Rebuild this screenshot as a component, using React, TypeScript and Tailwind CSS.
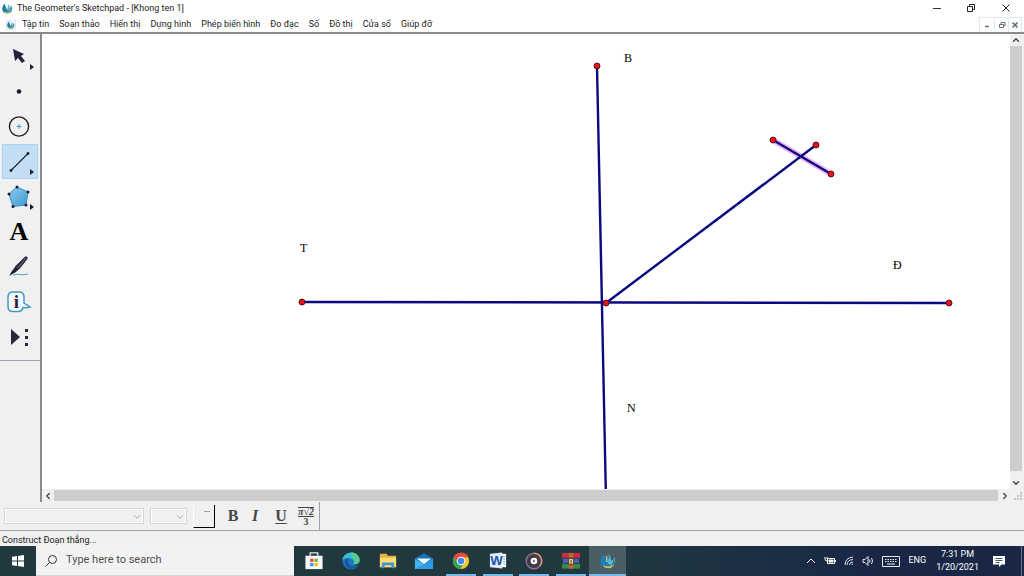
import type { ReactNode } from "react";
import { ChevronDown, ChevronLeft, ChevronRight, ChevronUp } from "lucide-react";

const menus = [
  "Tập tin",
  "Soạn thảo",
  "Hiển thị",
  "Dựng hình",
  "Phép biến hình",
  "Đo đạc",
  "Số",
  "Đồ thị",
  "Cửa sổ",
  "Giúp đỡ",
];

function AppLogo({ className }: { className: string }) {
  return (
    <svg viewBox="0 0 16 16" className={className} aria-hidden="true">
      <path d="M4 1C-1 5-1 13 5 15c4 1 8 0 10-4-4 1-7 0-8-3C5 6 5 4 4 1z" fill="#1c7fae" />
      <path d="M7 1c3 2 2 4 1 6s0 5 3 5c4-1 5-5 3-8-1 3-2 4-3 3 0-3-1-5-4-6z" fill="#58b5cb" />
      <path d="M3 12c3 2 8 2 11-1-1 4-5 5-7 4-2 0-3-1-4-3z" fill="#d9c04a" />
      <path d="M6 3c2 2 0 4 1 6" stroke="#e5f3e4" strokeWidth="1" fill="none" />
      <path d="M12 4c2 3 2 6 0 8" stroke="#1d5c91" strokeWidth="1" fill="none" />
    </svg>
  );
}

function TitleBar() {
  return (
    <header className="flex h-[17px] shrink-0 items-center justify-between bg-white pl-0.5 text-[9px]">
      <div className="flex items-center gap-1">
        <AppLogo className="size-[11px]" />
        <h1>The Geometer's Sketchpad - [Khong ten 1]</h1>
      </div>
      <div className="flex h-full pb-px">
        <button aria-label="Minimize" className="flex w-[34px] items-center justify-center">
          <svg viewBox="0 0 10 10" className="size-2.5" stroke="#333" fill="none">
            <path d="M1 5.5h8" />
          </svg>
        </button>
        <button aria-label="Restore" className="flex w-[34px] items-center justify-center">
          <svg viewBox="0 0 10 10" className="size-2.5" stroke="#222" fill="none">
            <path d="M1.5 3.5h5v5h-5zM3.5 3.5v-2h5v5h-2" />
          </svg>
        </button>
        <button aria-label="Close" className="flex w-9 items-center justify-center">
          <svg viewBox="0 0 10 10" className="size-2.5" stroke="#222" fill="none">
            <path d="M1.5 1.5l7 7M8.5 1.5l-7 7" />
          </svg>
        </button>
      </div>
    </header>
  );
}

function MenuBar() {
  return (
    <nav className="flex h-[15px] shrink-0 items-center justify-between bg-white pl-1.5 pr-0.5 text-[9px]">
      <div className="flex items-center">
        <span className="mr-1.5 flex size-2.5 items-center justify-center border border-slate-200 bg-slate-50">
          <AppLogo className="size-2" />
        </span>
        <div className="flex gap-2.5">
          {menus.map((m) => (
            <button key={m}>{m}</button>
          ))}
        </div>
      </div>
      <div className="flex self-stretch text-[#5c7387]">
        <button aria-label="Minimize document" className="flex w-[15px] items-center justify-center border-l border-t border-slate-200">
          <svg viewBox="0 0 8 8" className="size-2" stroke="currentColor" fill="none">
            <path d="M2 5.5h4" strokeWidth="1.4" />
          </svg>
        </button>
        <button aria-label="Restore document" className="flex w-3.5 items-center justify-center border-l border-t border-slate-200">
          <svg viewBox="0 0 8 8" className="size-2" stroke="currentColor" fill="none">
            <path d="M1.5 3.5h4v3h-4zM3 3V1.5h4v3H6" />
          </svg>
        </button>
        <button aria-label="Close document" className="flex w-3.5 items-center justify-center border-x border-t border-slate-200">
          <svg viewBox="0 0 8 8" className="size-2" stroke="currentColor" fill="none">
            <path d="M1.5 1.5l5 5M6.5 1.5l-5 5" strokeWidth="1.6" />
          </svg>
        </button>
      </div>
    </nav>
  );
}

const tools: { name: string; icon: ReactNode }[] = [
  {
    name: "Arrow",
    icon: (
      <>
        <path d="M14 10l11 5-3 2 4 5-3 2-4-5-3 3z" fill="#25213f" />
        <path d="M31 25l4 3-4 3z" fill="#222136" />
      </>
    ),
  },
  { name: "Point", icon: <circle cx="20" cy="17.5" r="2.3" fill="#1d1b33" /> },
  {
    name: "Compass",
    icon: (
      <>
        <circle cx="20" cy="17.5" r="9.6" fill="none" stroke="#1f2023" strokeWidth="1.4" />
        <path d="M17.5 17.5h5M20 15v5" stroke="#3e9fd0" />
      </>
    ),
  },
  {
    name: "Straightedge",
    icon: (
      <>
        <path d="M12 26.5l17-17" stroke="#26263b" strokeWidth="1.3" />
        <circle cx="12" cy="26.5" r="1.4" fill="#1d1b33" />
        <circle cx="29" cy="9.5" r="1.4" fill="#1d1b33" />
        <path d="M31 25l4 3-4 3z" fill="#222136" />
      </>
    ),
  },
  {
    name: "Polygon",
    icon: (
      <>
        <path d="M18 8l11 5-2 13-13 1.5L10 15z" fill="url(#poly)" stroke="#358fc0" />
        <g fill="#1d1b33">
          <circle cx="18" cy="8" r="1.5" />
          <circle cx="29" cy="13" r="1.5" />
          <circle cx="27" cy="26" r="1.5" />
          <circle cx="14" cy="27.5" r="1.5" />
          <circle cx="10" cy="15" r="1.5" />
          <path d="M31 25l4 3-4 3z" />
        </g>
      </>
    ),
  },
  { name: "Text", icon: null },
  {
    name: "Marker",
    icon: (
      <>
        <path d="M26 8q3-1 2 2l-8 10-4-2z" fill="#35344c" stroke="#35344c" />
        <path d="M16 18l4 2-3 3-7 4 3-5z" fill="#20202e" />
        <path d="M25 9l1 1-7 9" stroke="#77778a" strokeWidth=".7" fill="none" />
        <path d="M14 26c5-2 9 1 15-1" stroke="#4da2cd" fill="none" />
      </>
    ),
  },
  {
    name: "Information",
    icon: (
      <>
        <path
          d="M14 8h6q5 0 5 5v6l6 4q-3 1-7 .5-1 4-5 4h-5q-5 0-5-5V13q0-5 5-5z"
          fill="#f7fbff"
          stroke="#4598cc"
          strokeWidth="1.5"
        />
        <text x="17.5" y="24" textAnchor="middle" fill="#29223f" className="font-['Liberation_Serif',serif] text-[19px] font-bold">
          i
        </text>
      </>
    ),
  },
  {
    name: "Custom",
    icon: (
      <g fill="#29263e">
        <path d="M12 10l9 8-9 8zM26 10h3v3h-3zM26 17h3v3h-3zM26 24h3v3h-3z" />
      </g>
    ),
  },
];

function Toolbox() {
  return (
    <aside className="w-10 shrink-0 bg-[#f0f0f0] pt-[5px]">
      <div className="flex flex-col border-b border-gray-400 pb-1.5">
        {tools.map((t) => (
          <button
            key={t.name}
            aria-label={t.name}
            className={
              t.name === "Straightedge"
                ? "mx-0.5 flex h-[35px] items-center justify-center border border-[#a9d3f2] bg-[#c3def4]"
                : "mx-0.5 flex h-[35px] items-center justify-center"
            }
          >
            {t.icon ? (
              <svg viewBox="2 0 38 35" className="h-[35px] w-[38px] shrink-0">
                <defs>
                  <linearGradient id="poly" x1="0" y1="0" x2="1" y2="1">
                    <stop offset="0" stopColor="#8dcdf0" />
                    <stop offset="1" stopColor="#3d9ad0" />
                  </linearGradient>
                </defs>
                {t.icon}
              </svg>
            ) : (
              <span className="pr-0.5 font-['Liberation_Serif',serif] text-[26px] font-bold leading-none text-black">A</span>
            )}
          </button>
        ))}
      </div>
    </aside>
  );
}

const segments = [
  [597, 66, 606, 500],
  [302, 302, 949, 303],
  [606, 303, 816, 145],
  [773, 140, 831, 174],
];

const points = [
  [597, 66],
  [302, 302],
  [949, 303],
  [606, 303],
  [816, 145],
  [773, 140],
  [831, 174],
];

const labels: [string, number, number][] = [
  ["B", 624, 62],
  ["T", 300, 252],
  ["Đ", 893, 269],
  ["N", 627, 412],
];

function Sketch() {
  return (
    <svg
      viewBox="42 34 968 455"
      preserveAspectRatio="xMinYMin slice"
      className="min-h-0 min-w-0 flex-1 bg-white"
    >
      <line x1="773" y1="140" x2="831" y2="174" stroke="#f0b4f4" strokeWidth="6" />
      {segments.map(([x1, y1, x2, y2], i) => (
        <line key={i} x1={x1} y1={y1} x2={x2} y2={y2} stroke="#0a0a80" strokeWidth="2.4" />
      ))}
      {points.map(([x, y], i) => (
        <circle key={i} cx={x} cy={y} r="3" fill="#ee1018" stroke="#4a0a18" strokeWidth="0.9" />
      ))}
      {labels.map(([text, x, y]) => (
        <text key={text} x={x} y={y} className="fill-black font-['Liberation_Serif',serif] text-[12px]">
          {text}
        </text>
      ))}
    </svg>
  );
}

function Workspace() {
  return (
    <main className="flex min-h-0 flex-1 border-t-2 border-[#8b8b8b] bg-[#f0f0f0]">
      <Toolbox />
      <div className="flex min-w-0 flex-1 flex-col border-l-2 border-[#8b8b8b]">
        <div className="flex min-h-0 flex-1">
          <Sketch />
          <div className="flex w-3.5 flex-col items-center pr-0.5 text-gray-700">
            <button aria-label="Scroll up" className="flex h-3 items-center">
              <ChevronUp className="size-2.5" strokeWidth={3} />
            </button>
            <div className="w-full flex-1 bg-[#cdcdcd]" />
            <button aria-label="Scroll down" className="flex h-[18px] items-center pt-1.5">
              <ChevronDown className="size-2.5" strokeWidth={3} />
            </button>
          </div>
        </div>
        <div className="flex h-[13px] items-center text-gray-700">
          <button aria-label="Scroll left" className="flex w-3 justify-center">
            <ChevronLeft className="size-2.5" strokeWidth={3} />
          </button>
          <div className="h-[11px] flex-1 bg-[#cdcdcd]" />
          <button aria-label="Scroll right" className="flex w-3.5 justify-center">
            <ChevronRight className="size-2.5" strokeWidth={3} />
          </button>
          <svg viewBox="0 0 12 12" className="size-3" fill="#c4c4c4">
            <path d="M8 2h2v2H8zM5 5h2v2H5zM8 5h2v2H8zM2 8h2v2H2zM5 8h2v2H5zM8 8h2v2H8z" />
          </svg>
        </div>
      </div>
    </main>
  );
}

function FormatBar() {
  return (
    <div className="flex h-[29px] shrink-0 items-center border-b border-gray-400 bg-[#f0f0f0] font-['Liberation_Serif',serif] text-base text-[#464646]">
      <div className="relative ml-1 h-4 w-[140px] text-gray-400">
        <select aria-label="Font" disabled className="size-full appearance-none border border-gray-300 bg-[#f0f0f0] outline outline-white -outline-offset-2" />
        <ChevronDown className="pointer-events-none absolute right-0.5 top-1 size-2.5" />
      </div>
      <div className="relative ml-1.5 h-4 w-[37px] text-gray-400">
        <select aria-label="Font size" disabled className="size-full appearance-none border border-gray-300 bg-[#f0f0f0] outline outline-white -outline-offset-2" />
        <ChevronDown className="pointer-events-none absolute right-0.5 top-1 size-2.5" />
      </div>
      <button aria-label="Text color" className="ml-1.5 flex h-[23px] w-[22px] justify-end border-b border-r border-l border-black border-l-white bg-[#f0f0f0] pr-1 pt-1.5">
        <span className="h-px w-1.5 bg-gray-400" />
      </button>
      <button className="ml-1.5 w-6 font-bold">B</button>
      <button className="w-5 font-bold italic">I</button>
      <button className="ml-1 w-6 font-bold underline underline-offset-2">U</button>
      <button
        aria-label="Math notation"
        className="flex h-full w-[27px] flex-col items-center justify-center border-r border-gray-400 text-[10px] font-bold leading-[9px]"
      >
        <span className="border-y border-[#464646] italic leading-[8px]">π√2</span>
        <span>3</span>
      </button>
    </div>
  );
}

const apps: { name: string; open?: boolean; active?: boolean; icon: ReactNode }[] = [
  {
    name: "Microsoft Store",
    icon: (
      <>
        <path d="M6.5 6V2h8v4" fill="none" stroke="#e9eef0" strokeWidth="1.3" />
        <path d="M1.5 5h18v14h-18z" fill="#f8f8f8" />
        <path d="M6.5 8H10v3.500H6.500z" fill="#e5532d" />
        <path d="M11 8h3.500v3.500H11z" fill="#7ab52d" />
        <path d="M6.5 12.500H10V16H6.500z" fill="#2da0df" />
        <path d="M11 12.500h3.500V16H11z" fill="#f5b81f" />
      </>
    ),
  },
  {
    name: "Edge",
    icon: (
      <>
        <circle cx="10.5" cy="10.5" r="9" fill="#2174c9" />
        <path d="M1.5 10C2 0 18-2 19.500 9c.5 4-3 6-7 5 2-2 1-5-2-6-3-1-7-1-9 2z" fill="#39bfd1" />
        <path d="M11 1.600c5 0 9 4 8.500 8.400-.5 3-4 5-7 4 3-3 2-6-.5-7z" fill="#56cd88" />
        <path d="M9 8c-3 3-1 8 4 8 2 0 4-.5 5-1.500-3 5-10 6-13 1S5 8 9 8z" fill="#125a9d" />
        <path d="M12 13c2 2 5 1.500 8-1v2.500c-3 1.500-6 1-8-1.500z" fill="#21373f" />
      </>
    ),
  },
  {
    name: "File Explorer",
    icon: (
      <>
        <path d="M2 3h7l1.500 2H19v12H2z" fill="#e9b339" />
        <path d="M2 7h17v10H2z" fill="#fbdc79" />
        <path d="M4 18v-6h13v6h-3v-3H7v3z" fill="#4096cf" />
      </>
    ),
  },
  {
    name: "Mail",
    icon: (
      <>
        <path d="M1 8l9.500-6L20 8v11H1z" fill="#1870b8" />
        <path d="M3 8h15l-7.500 6z" fill="#eef8ff" />
        <path d="M1 8l9.500 6L20 8v11H1z" fill="#2e9be2" />
        <path d="M1 19V9l9.500 5z" fill="#49b2ef" />
      </>
    ),
  },
  {
    name: "Chrome",
    open: true,
    icon: (
      <>
        <circle cx="10.5" cy="10.5" r="8.5" fill="#f3c530" />
        <path d="M3 6.500a8.500 8.500 0 0 1 15.400 0h-8L7 12z" fill="#e64a3b" />
        <path d="M3 6.500a8.500 8.500 0 0 0 6.700 12.500l4-6.500-7-1z" fill="#30a352" />
        <circle cx="10.5" cy="10.5" r="4.5" fill="#f8f8f8" />
        <circle cx="10.5" cy="10.5" r="3.4" fill="#4387ed" />
      </>
    ),
  },
  {
    name: "Word",
    open: true,
    icon: (
      <>
        <path d="M2 3l13-1.500v17L2 17z" fill="#dfeaf8" />
        <path d="M14 3h5v14h-5z" fill="#fff" />
        <path d="M16 6h2M16 8.500h2M16 11h2M16 13.500h2" stroke="#7ba0d4" />
        <text x="9" y="15" textAnchor="middle" fill="#2459a9" className="font-['Liberation_Sans',sans-serif] text-[14px] font-bold">
          W
        </text>
      </>
    ),
  },
  {
    name: "Music",
    open: true,
    icon: (
      <>
        <circle cx="10.5" cy="10.5" r="8.2" fill="#403c48" stroke="#8c7391" strokeWidth="1.5" />
        <path d="M10.5 2.300a8.200 8.200 0 0 1 6 13.500" fill="none" stroke="#e29567" strokeWidth="1.5" />
        <circle cx="10.5" cy="10.5" r="3.5" fill="#fff" />
        <circle cx="10.5" cy="10.5" r="1" fill="#403c48" />
      </>
    ),
  },
  {
    name: "WinRAR",
    open: true,
    icon: (
      <>
        <path d="M1 2h19v5.500H1z" fill="#c92c46" />
        <path d="M2 7.500h17V13H2z" fill="#4a62b7" />
        <path d="M1 13h19v5.500H1z" fill="#378b4a" />
        <path d="M8 2h5v16.500H8z" fill="#b9682e" />
        <path d="M2 7.500h17M2 13h17" stroke="#2f2b39" strokeWidth=".8" />
        <path d="M8 8h5v6H8z" fill="#f1dfb2" stroke="#57391e" />
        <path d="M10.5 9.500v4" stroke="#57391e" />
      </>
    ),
  },
  { name: "Sketchpad", open: true, active: true, icon: null },
];

function Taskbar() {
  return (
    <footer className="flex h-[30px] shrink-0 bg-linear-to-r from-[#21383f] from-60% to-[#192745] to-85% text-white">
      <button aria-label="Start" className="flex w-9 items-center justify-center">
        <svg viewBox="0 0 14 14" className="size-3.5" fill="#fff">
          <path d="M1 2.700l5-.7v4.500H1zM7 1.900L13 1v5.500H7zM1 7.500h5V12l-5-.7zM7 7.500h6V13l-6-.9z" />
        </svg>
      </button>
      <label className="flex w-[258px] items-center gap-2 border-b border-gray-300 bg-[#f2f2f2] pl-2 text-gray-700">
        <svg viewBox="0 0 14 14" className="size-3.5 shrink-0" fill="none" stroke="#333">
          <circle cx="8.5" cy="5.5" r="4" />
          <path d="M5.700 8.300L1.500 12.500" />
        </svg>
        <input
          aria-label="Search"
          placeholder="Type here to search"
          className="w-full bg-transparent text-[11px] outline-none placeholder:text-[#505050]"
        />
      </label>
      <div className="ml-0.5 grid w-[330px] grid-cols-9">
        {apps.map((app) => (
          <button
            key={app.name}
            aria-label={app.name}
            className={
              app.active
                ? "flex items-center justify-center bg-[#4b5e66]"
                : "flex items-center justify-center"
            }
          >
            <span
              className={
                app.active
                  ? "flex h-full w-full items-center justify-center border-b-2 border-[#76b9ed]"
                  : app.open
                    ? "flex h-full w-[30px] items-center justify-center border-b-2 border-[#76b9ed]"
                    : "flex h-full w-[30px] items-center justify-center border-b-2 border-transparent"
              }
            >
              {app.icon ? (
                <svg viewBox="0 0 21 21" className="mt-0.5 size-5">
                  {app.icon}
                </svg>
              ) : (
                <AppLogo className="mt-0.5 size-4" />
              )}
            </span>
          </button>
        ))}
      </div>
      <div className="ml-auto flex items-center text-[9px]">
        <div className="flex items-center gap-2">
          <button aria-label="Show hidden icons">
            <svg viewBox="0 0 10 10" className="size-2.5" fill="none" stroke="#fff">
              <path d="M1 7l4-4 4 4" />
            </svg>
          </button>
          <svg viewBox="0 0 12 10" className="h-2.5 w-3" fill="none" stroke="#fff">
            <path d="M1 1v2q0 2 2 2M3 1v2M3.500 2.500h7v5h-7zM11.500 4v2" />
            <path d="M5 4h4v2H5z" fill="#fff" />
          </svg>
          <svg viewBox="0 0 10 10" className="size-2.5" fill="none" stroke="#dce2ea">
            <path d="M1 9Q1 2 9 1M3 9q0-5 6-5.500M5.500 9q0-3 3.500-3M7.500 9Q8 8 9 8" />
          </svg>
          <svg viewBox="0 0 12 12" className="size-3" fill="none" stroke="#e8edf2">
            <path d="M1 4.500h2l3-3v9l-3-3H1zM7.500 4.500q1 1.500 0 3M9.500 3q2 3 0 6" />
          </svg>
          <svg viewBox="0 0 18 11" className="h-[11px] w-[18px]" fill="none" stroke="#e8edf2">
            <path d="M.5.5h17v10H.5z" />
            <path d="M3 3.500h12M3 5.500h12" strokeDasharray="1.5 1" />
            <path d="M5 8h8" />
          </svg>
          <span>ENG</span>
        </div>
        <div className="ml-2.5 flex flex-col items-center leading-[13px]">
          <span>7:31 PM</span>
          <span>1/20/2021</span>
        </div>
        <button aria-label="Notifications" className="ml-3.5 mr-4">
          <svg viewBox="0 0 12 12" className="size-3">
            <path d="M0 1h12v8.500H8.500L6 12V9.500H0z" fill="#fff" />
            <path d="M2.500 3.500h7M2.500 5.500h7M2.500 7.500h4" stroke="#1d2b48" strokeWidth=".8" />
          </svg>
        </button>
        <span className="mr-0.5 h-full border-l border-slate-500" />
      </div>
    </footer>
  );
}

export default function App() {
  return (
    <div className="flex h-screen flex-col overflow-hidden bg-[#f0f0f0] font-['Roboto',sans-serif] text-[#1c1c1c]">
      <TitleBar />
      <MenuBar />
      <Workspace />
      <FormatBar />
      <p className="h-[15px] shrink-0 pl-0.5 text-[9px] leading-[18px]">Construct Đoạn thẳng...</p>
      <Taskbar />
    </div>
  );
}
